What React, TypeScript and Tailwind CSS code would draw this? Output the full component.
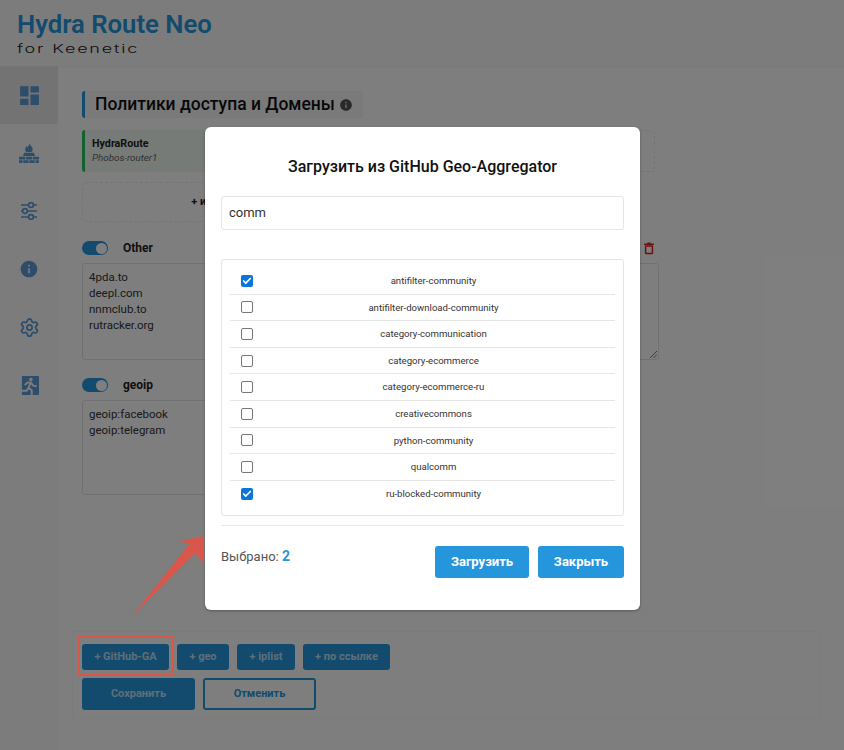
import React from 'react';
import { MdDashboard, MdInfo } from 'react-icons/md';
import { Check, Settings } from 'lucide-react';

const FirewallIcon = ({ className = '' }: { className?: string }) => (
  <svg viewBox="0 0 20 20" fill="currentColor" className={className}>
    <path d="M10 0c.6 2 3 3.200 3.600 5.400.4 1.500-.2 2.800-1 3.600H7.300c-1-.9-1.400-2.200-1-3.500.3-.9 1-1.500 1.300-2.400.6.300.9.800 1 1.400C9.800 3.200 10.300 1.600 10 0z" />
    <path d="M5.200 9.800h9.600l1.400 3.200H3.800z" />
    <path d="M0 13.800h6.300v2.700H0zM7.100 13.800h5.800v2.700H7.100zM13.700 13.800H20v2.700h-6.300zM0 17.300h3.500V20H1a1 1 0 0 1-1-1zM4.300 17.300h5.300V20H4.300zM10.400 17.300h5.300V20h-5.300zM16.500 17.300H20V19a1 1 0 0 1-1 1h-2.500z" />
  </svg>
);

const SlidersIcon = ({ className = '' }: { className?: string }) => (
  <svg viewBox="0 0 18 18" fill="none" stroke="currentColor" strokeWidth="1.700" className={className}>
    <path d="M1 3h7.500M13.500 3H17M1 9h1.500M7.500 9H17M1 15h7.500M13.500 15H17" />
    <circle cx="11" cy="3" r="2.400" />
    <circle cx="5" cy="9" r="2.400" />
    <circle cx="11" cy="15" r="2.400" />
  </svg>
);

const ExitIcon = ({ className = '' }: { className?: string }) => (
  <svg viewBox="0 0 20 20" className={className}>
    <rect x="2" y="0" width="18" height="20" rx="1" fill="currentColor" />
    <circle cx="11.500" cy="3.800" r="1.900" fill="#f8f8f8" />
    <path d="M5 9.500 8 6.800l3.500.2 2.500 3.200 3.500.6M11 7.500l-2 5 3.300 2.400V20M9 12.500l-2 3H1" fill="none" stroke="#f8f8f8" strokeWidth="2" />
  </svg>
);

const TrashIcon = ({ className = '' }: { className?: string }) => (
  <svg viewBox="0 0 12 14" fill="none" stroke="currentColor" strokeWidth="1.800" className={className}>
    <path d="M0 1.900h12M4 .7h4" />
    <rect x="1.900" y="4" width="8.200" height="9.100" rx=".6" />
  </svg>
);

const sideIcons = [
  { icon: <MdDashboard className="w-[25px] h-[25px]" />, active: true },
  { icon: <FirewallIcon className="w-[20px] h-[20px]" /> },
  { icon: <SlidersIcon className="w-[18px] h-[18px]" /> },
  { icon: <MdInfo className="w-[20px] h-[20px]" /> },
  { icon: <Settings className="w-[21px] h-[21px]" strokeWidth={2} /> },
  { icon: <ExitIcon className="w-[19px] h-[19px]" /> },
];

const geoItems = [
  { name: 'antifilter-community', checked: true },
  { name: 'antifilter-download-community' },
  { name: 'category-communication' },
  { name: 'category-ecommerce' },
  { name: 'category-ecommerce-ru' },
  { name: 'creativecommons' },
  { name: 'python-community' },
  { name: 'qualcomm' },
  { name: 'ru-blocked-community', checked: true },
];

const Toggle = () => (
  <div className="w-[26px] h-[14px] rounded-full bg-[#2596db] flex items-center justify-end pr-[1.500px]">
    <div className="w-[11px] h-[11px] rounded-full bg-white" />
  </div>
);

const PolicyBlock = ({ name, lines, rows, wide }: { name: string; lines: string[]; rows: string; wide?: boolean }) => (
  <div className="flex flex-col">
    <div className="flex items-center h-[14px] gap-[15px] mb-[8px]">
      <Toggle />
      <span className="text-[12px] font-bold text-[#222]">{name}</span>
      {wide && <TrashIcon className="w-[10px] h-[13px] text-[#dc2020] ml-auto mr-[5px]" />}
    </div>
    <div className={`${rows} relative border border-[#e3e3e3] rounded-[3px] px-[6px] py-[5px] text-[11.500px] leading-[16px] text-[#333]`}>
      {lines.map((l) => <div key={l}>{l}</div>)}
      {wide && (
        <svg className="absolute right-[1px] bottom-[1px] w-[7px] h-[7px]" viewBox="0 0 7 7" stroke="#555" strokeWidth="0.800">
          <path d="M0 7 7 0M3.500 7 7 3.500" />
        </svg>
      )}
    </div>
  </div>
);

export default function App() {
  return (
    <div className="relative w-[844px] h-[750px] overflow-hidden bg-[#fdfdfd] flex flex-col font-['Roboto',sans-serif]">
      {/* header */}
      <header className="h-[66px] shrink-0 bg-[#f9f9f9] shadow-[0_1px_2px_rgba(0,0,0,0.06)] pl-[17px] pt-[9px]">
        <h1 className="text-[25.700px] leading-[30px] font-semibold text-[#2596db]">Hydra Route Neo</h1>
        <p className="mt-[2px] text-[12px] leading-[15px] tracking-[0.1em] font-light text-[#222] origin-left scale-x-[1.5] font-['Inter',sans-serif]">for Keenetic</p>
      </header>

      <div className="flex flex-1">
        <aside className="w-[58px] shrink-0 bg-[#f8f8f8]">
          {sideIcons.map((s, i) => (
            <div key={i} className={`h-[58px] flex items-center justify-center text-[#5b9bd5] ${s.active ? 'bg-[#e6e6e6]' : ''}`}>
              {s.icon}
            </div>
          ))}
        </aside>

        <main className="flex-1 flex flex-col pt-[25px] pl-[24px] min-w-0">
          <div className="flex items-center self-start h-[27px] bg-[#f5f5f5] border-l-[3px] border-[#2596db] rounded-l-[3px] pl-[10px] pr-[8px] w-[281px]">
            <h2 className="text-[17.500px] font-medium text-[#111] whitespace-nowrap">Политики доступа и Домены</h2>
            <MdInfo className="w-[14px] h-[14px] text-[#555] ml-[4px]" />
          </div>

          <div className="flex gap-[10px] mt-[12px] w-[573px]">
            <div className="w-[160px] h-[42px] bg-[#eef6f0] border-l-[3px] border-[#22c55e] rounded-[3px] pl-[7px] pt-[7px]">
              <div className="text-[10.700px] leading-[14px] font-bold text-[#222]">HydraRoute</div>
              <div className="text-[9.800px] leading-[14px] italic text-[#666]">Phobos-router1</div>
            </div>
            <div className="flex-1 h-[42px] border border-dashed border-[#eaeaea] rounded-[3px]" />
          </div>

          <div className="w-[266px] h-[40px] mt-[10px] border border-dashed border-[#eaeaea] rounded-[3px] flex items-center justify-center text-[11px] font-bold text-[#222]">
            + импорт
          </div>

          <div className="w-[577px] mt-[19px]">
            <PolicyBlock name="Other" lines={['4pda.to', 'deepl.com', 'nnmclub.to', 'rutracker.org']} rows="h-[97px]" wide />
          </div>
          <div className="w-[540px] mt-[18px]">
            <PolicyBlock name="geoip" lines={['geoip:facebook', 'geoip:telegram']} rows="h-[95px]" />
          </div>

          <div className="flex-1" />

          {/* action bar */}
          <div className="-ml-[10px] mb-[31px] w-[748px] h-[88px] border border-[#f6f6f6] rounded-[3px] pl-[9px] pt-[12px] flex flex-col gap-[8px]">
            <div className="flex gap-[8px]">
              {[
                { label: '+ GitHub-GA', w: 'w-[87px]' },
                { label: '+ geo', w: 'w-[52px]' },
                { label: '+ iplist', w: 'w-[58px]' },
                { label: '+ по ссылке', w: 'w-[87px]' },
              ].map((b) => (
                <button key={b.label} className={`${b.w} h-[26px] bg-[#2596db] text-white/70 rounded-[3px] text-[11px] font-bold`}>
                  {b.label}
                </button>
              ))}
            </div>
            <div className="flex gap-[8px]">
              <button className="w-[113px] h-[32px] bg-[#2596db] text-white/70 rounded-[3px] text-[11px] font-bold">Сохранить</button>
              <button className="w-[113px] h-[32px] border-[2px] border-[#2596db] text-[#2596db] rounded-[3px] text-[11px] font-bold">Отменить</button>
            </div>
          </div>
        </main>
      </div>

      {/* modal */}
      <div className="absolute inset-0 bg-black/50 pl-[205px] pt-[127px]">
        <div className="w-[435px] h-[483px] bg-white rounded-[6px] shadow-[0_1px_3px_rgba(0,0,0,0.3)] px-[16px] flex flex-col">
          <h3 className="mt-[30px] h-[20px] leading-[20px] text-center text-[16px] font-medium text-[#111]">Загрузить из GitHub Geo-Aggregator</h3>
          <div className="mt-[19px] h-[34px] border border-[#e5e5e5] rounded-[3px] px-[7px] flex items-center text-[13px] text-[#333]">comm</div>
          <div className="mt-[29px] h-[257px] border border-[#e5e5e5] rounded-[3px] px-[8px] py-[8px]">
            {geoItems.map((it, i) => (
              <div key={it.name} className={`h-[26.600px] flex items-center ${i < geoItems.length - 1 ? 'border-b border-[#e5e5e5]' : ''}`}>
                <div className="w-[50px] pl-[11px] shrink-0">
                  {it.checked ? (
                    <div className="w-[12px] h-[12px] rounded-[2px] bg-[#0b75d9] flex items-center justify-center">
                      <Check className="w-[10px] h-[10px] text-white" strokeWidth={4} />
                    </div>
                  ) : (
                    <div className="w-[12px] h-[12px] rounded-[2px] border border-[#767676] bg-white" />
                  )}
                </div>
                <span className="flex-1 text-center text-[9.600px] text-[#333] pr-[28px] pt-[1px]">{it.name}</span>
              </div>
            ))}
          </div>
          <div className="mt-[9px] border-t border-[#e5e5e5]" />
          <div className="mt-[20px] flex items-start">
            <div className="text-[13px] leading-[20px] text-[#555]">
              Выбрано: <span className="text-[14px] font-bold text-[#2596db]">2</span>
            </div>
            <div className="ml-auto flex gap-[9px]">
              <button className="w-[94px] h-[32px] bg-[#2596db] text-white rounded-[3px] text-[13px] font-bold">Загрузить</button>
              <button className="w-[86px] h-[32px] bg-[#2596db] text-white rounded-[3px] text-[13px] font-bold">Закрыть</button>
            </div>
          </div>
        </div>
      </div>

      {/* annotation */}
      <div className="absolute left-[78px] top-[636px] w-[96px] h-[40px] border-[2px] border-[#d9574a]" />
      <svg className="absolute left-[130px] top-[530px] w-[75px] h-[90px]" viewBox="0 0 75 90">
        <path d="M0 88.500 60 13.300 46.700 11.700 74 6V34L65 23.300Z" fill="#d9574a" />
      </svg>
    </div>
  );
}
